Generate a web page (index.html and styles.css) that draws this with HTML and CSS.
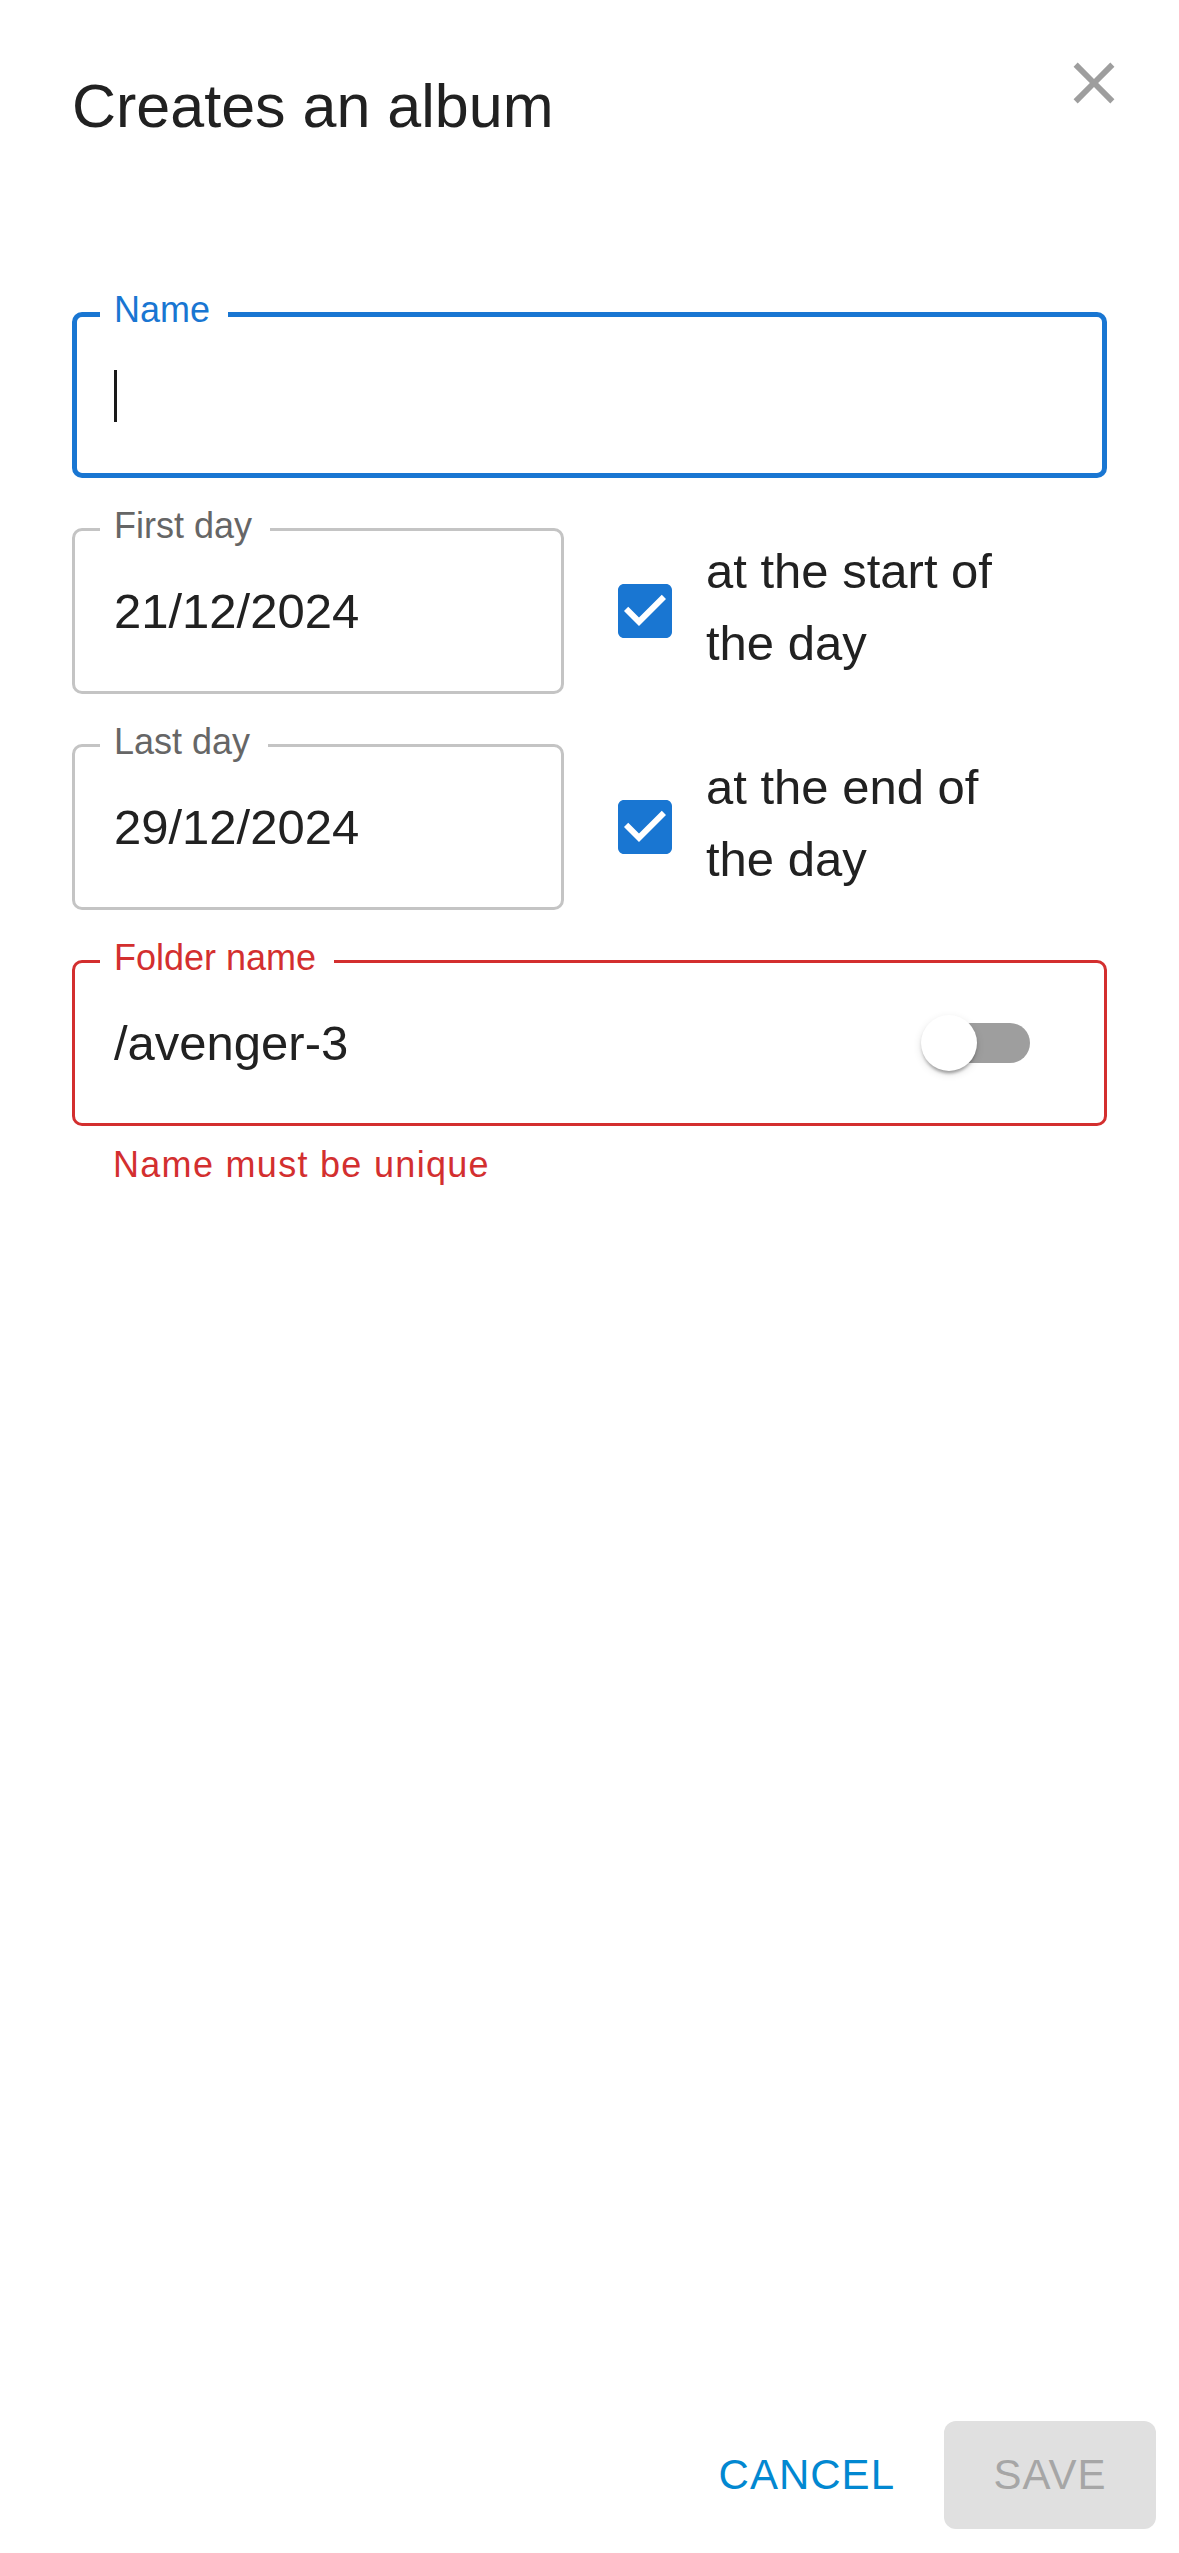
FILE: index.html
```html
<!DOCTYPE html>
<html lang="en">
<head>
<meta charset="utf-8">
<title>Creates an album</title>
<link rel="stylesheet" href="styles.css">
</head>
<body>
<div class="dialog">
  <header class="header">
    <h1 class="title">Creates an album</h1>
    <button class="close" type="button" aria-label="Close">
      <svg viewBox="0 0 24 24" width="70" height="70"><path fill="#9e9e9e" d="M19 6.41 17.59 5 12 10.59 6.41 5 5 6.41 10.59 12 5 17.59 6.41 19 12 13.41 17.59 19 19 17.59 13.41 12z"/></svg>
    </button>
  </header>

  <form class="form">
    <div class="field field--focused">
      <span class="field__label">Name</span>
      <span class="caret"></span>
    </div>

    <div class="row">
      <div class="field field--half">
        <span class="field__label">First day</span>
        <span class="field__value">21/12/2024</span>
      </div>
      <div class="check">
        <svg class="check__box" viewBox="0 0 24 24" width="72" height="72"><path fill="#1976d2" d="M19 3H5c-1.11 0-2 .9-2 2v14c0 1.1.89 2 2 2h14c1.11 0 2-.9 2-2V5c0-1.1-.89-2-2-2zm-9 14l-5-5 1.41-1.41L10 14.17l7.59-7.59L19 8l-9 9z"/></svg>
        <span class="check__text">at the start of the day</span>
      </div>
    </div>

    <div class="row">
      <div class="field field--half">
        <span class="field__label">Last day</span>
        <span class="field__value">29/12/2024</span>
      </div>
      <div class="check">
        <svg class="check__box" viewBox="0 0 24 24" width="72" height="72"><path fill="#1976d2" d="M19 3H5c-1.11 0-2 .9-2 2v14c0 1.1.89 2 2 2h14c1.11 0 2-.9 2-2V5c0-1.1-.89-2-2-2zm-9 14l-5-5 1.41-1.41L10 14.17l7.59-7.59L19 8l-9 9z"/></svg>
        <span class="check__text">at the end of the day</span>
      </div>
    </div>

    <div class="group">
      <div class="field field--error">
        <span class="field__label">Folder name</span>
        <span class="field__value">/avenger-3</span>
        <span class="switch">
          <span class="switch__track"></span>
          <span class="switch__thumb"></span>
        </span>
      </div>
      <p class="helper">Name must be unique</p>
    </div>
  </form>

  <footer class="actions">
    <button class="btn btn--text" type="button">CANCEL</button>
    <button class="btn btn--disabled" type="button">SAVE</button>
  </footer>
</div>
</body>
</html>
```

FILE: styles.css
```css
* { box-sizing: border-box; }

html, body {
  margin: 0;
  padding: 0;
  background: #ffffff;
}

body {
  font-family: "Liberation Sans", Arial, sans-serif;
  color: #212121;
}

.dialog {
  min-height: 100vh;
  display: flex;
  flex-direction: column;
}

.header {
  display: flex;
  justify-content: space-between;
  align-items: flex-start;
  padding: 48px 50px 0 72px;
}

.title {
  margin: 22px 0 0 0;
  font-size: 61px;
  line-height: 72px;
  font-weight: 400;
  color: #212121;
}

.close {
  border: 0;
  padding: 0;
  margin: 0;
  background: none;
  width: 70px;
  height: 70px;
  display: block;
}
.close svg { display: block; }

.form {
  display: flex;
  flex-direction: column;
  gap: 50px;
  margin-top: 170px;
  padding: 0 72px;
}

.field {
  position: relative;
  height: 166px;
  border: 3px solid #c4c4c4;
  border-radius: 10px;
  display: flex;
  align-items: center;
  padding: 0 0 0 39px;
}

.field__label {
  position: absolute;
  top: -25px;
  left: 25px;
  padding: 0 18px 0 14px;
  background: #ffffff;
  font-size: 36px;
  line-height: 40px;
  color: #666666;
  white-space: nowrap;
}

.field--focused {
  border: 5px solid #1976d2;
  padding: 0 0 0 37px;
}
.field--focused .field__label {
  top: -27px;
  left: 23px;
  color: #1976d2;
}

.field--error {
  border-color: #d32f2f;
}
.field--error .field__label {
  color: #d32f2f;
}

.caret {
  display: block;
  width: 3px;
  height: 52px;
  margin-top: 2px;
  background: #1a1a1a;
}

.field__value {
  flex: 1;
  font-size: 49px;
  color: #212121;
  white-space: nowrap;
}

.row {
  display: flex;
  align-items: center;
}

.field--half {
  width: 492px;
  flex: none;
}

.check {
  display: flex;
  align-items: center;
  margin-left: 45px;
}

.check__box {
  display: block;
  flex: none;
}

.check__text {
  margin-left: 25px;
  margin-top: -8px;
  max-width: 330px;
  font-size: 49px;
  line-height: 72px;
  color: #212121;
}

.switch {
  position: relative;
  display: flex;
  align-items: center;
  width: 94px;
  height: 56px;
  margin-right: 74px;
}

.switch__track {
  display: block;
  width: 94px;
  height: 40px;
  border-radius: 20px;
  background: #9e9e9e;
}

.switch__thumb {
  position: absolute;
  left: -15px;
  top: 0;
  width: 56px;
  height: 56px;
  border-radius: 50%;
  background: #ffffff;
  box-shadow: 0 5px 3px -3px rgba(0,0,0,0.2), 0 3px 3px 0 rgba(0,0,0,0.14), 0 3px 8px 0 rgba(0,0,0,0.12);
}

.helper {
  margin: 19px 0 0 0;
  padding-left: 41px;
  font-size: 36px;
  line-height: 40px;
  letter-spacing: 1.3px;
  color: #d32f2f;
}

.actions {
  margin-top: auto;
  display: flex;
  justify-content: flex-end;
  gap: 27px;
  padding: 0 23px 24px 0;
}

.btn {
  height: 108px;
  border: 0;
  border-radius: 12px;
  padding: 0 22px;
  font-family: "Liberation Sans", Arial, sans-serif;
  font-size: 42px;
  font-weight: 400;
  letter-spacing: 1px;
  background: none;
}

.btn--text {
  color: #0288d1;
}

.btn--disabled {
  width: 212px;
  padding: 0;
  background: #e0e0e0;
  color: #a6a6a6;
}
```
